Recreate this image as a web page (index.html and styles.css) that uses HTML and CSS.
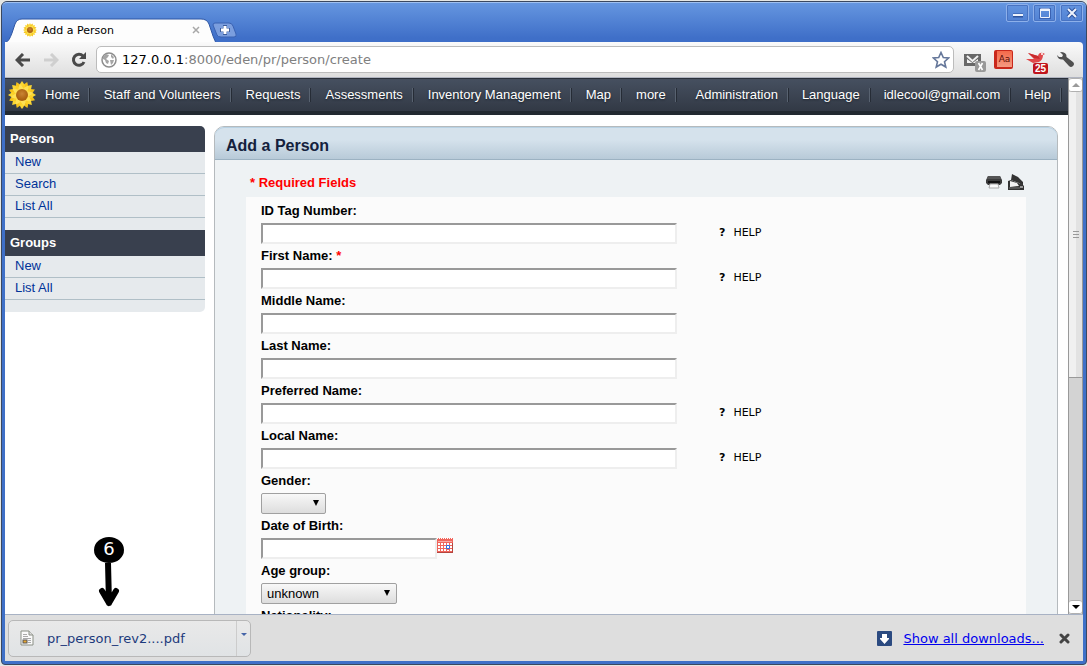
FILE: index.html
```html
<!DOCTYPE html>
<html lang="en">
<head>
    <meta charset="UTF-8">
    <meta name="viewport" content="width=device-width, initial-scale=1.0">
    <title>Add a Person</title>
    <link rel="stylesheet" href="styles.css">
</head>
<body>
    <!-- shared sunflower logo -->
    <svg class="defs" width="0" height="0" aria-hidden="true">
        <defs>
            <radialGradient id="seed" cy=".4">
                <stop offset="0" stop-color="#c98434"/>
                <stop offset="1" stop-color="#a9600f"/>
            </radialGradient>
            <path id="petal" d="M0 -14 Q4 -9 3 -4 L-3 -4 Q-4 -9 0 -14Z"/>
            <g id="ring">
                <use href="#petal"/>
                <use href="#petal" transform="rotate(45)"/>
                <use href="#petal" transform="rotate(90)"/>
                <use href="#petal" transform="rotate(135)"/>
                <use href="#petal" transform="rotate(180)"/>
                <use href="#petal" transform="rotate(225)"/>
                <use href="#petal" transform="rotate(270)"/>
                <use href="#petal" transform="rotate(315)"/>
            </g>
            <symbol id="sunflower" viewBox="-14 -14 28 28">
                <use href="#ring" fill="#f5c21a" transform="rotate(22)"/>
                <use href="#ring" fill="#fbd733"/>
                <use href="#ring" fill="#fbd027" transform="rotate(11) scale(.8)"/>
                <use href="#ring" fill="#fde055" transform="rotate(34) scale(.8)"/>
                <circle r="6" fill="url(#seed)"/>
            </symbol>
        </defs>
    </svg>

    <div class="window">
        <header class="titlebar">
            <div class="tab">
                <svg class="tab-shape" width="211" height="25" viewBox="0 0 211 25" aria-hidden="true">
                    <path d="M0 25 C4 23 5 20 7 15 L10 6 Q12 1 17 1 H196 Q202 1 204 6 L208 18 Q210 23 211 25Z" fill="#fdfdfd" stroke="#2f57a4"/>
                    <path d="M0 24H211V25H0Z" fill="#fafafa"/>
                </svg>
                <svg class="favicon" width="14" height="14"><use href="#sunflower"/></svg>
                <span class="tab-title">Add a Person</span>
                <button class="tab-close" aria-label="Close tab">
                    <svg width="8" height="8" viewBox="0 0 8 8"><path d="M1 1L7 7M7 1L1 7" stroke="#a8a8a8" stroke-width="1.500"/></svg>
                </button>
            </div>
            <button class="new-tab" aria-label="New tab">
                <svg width="26" height="16" viewBox="0 0 26 16">
                    <path d="M1 3 Q1 1 3 1 H17 Q20 1 21 4 L24 12 Q25 15 22 15 H9 Q6 15 5 13Z" fill="#7b9ede" stroke="#3a62b2"/>
                    <path d="M13 3V13M8 8H18" stroke="#3a5c9e" stroke-width="4"/>
                    <path d="M13 4V12M9 8H17" stroke="#fff" stroke-width="3"/>
                </svg>
            </button>
            <div class="window-buttons">
                <button aria-label="Minimize"><svg width="22" height="16"><path d="M6 10.500H16" stroke="#2d539d" stroke-width="4"/><path d="M6 10H16" stroke="#eef3fc" stroke-width="2"/></svg></button>
                <button aria-label="Maximize"><svg width="22" height="16"><path d="M6 4H16V13H6Z" fill="none" stroke="#3a62b2" stroke-width="2"/><path d="M6.500 4H15.500V12.500H6.500Z" fill="none" stroke="#eef3fc"/><path d="M6 5H16" stroke="#eef3fc" stroke-width="2"/></svg></button>
                <button aria-label="Close"><svg width="22" height="16"><path d="M7 4L15 12M15 4L7 12" stroke="#2d539d" stroke-width="4"/><path d="M7 4L15 12M15 4L7 12" stroke="#eef3fc" stroke-width="2"/></svg></button>
            </div>
        </header>

        <div class="toolbar">
            <button class="tool" aria-label="Back">
                <svg width="16" height="14" viewBox="0 0 16 14"><path d="M15 7H3M8 1L2 7L8 13" fill="none" stroke="#4a4a4a" stroke-width="3"/></svg>
            </button>
            <button class="tool" aria-label="Forward">
                <svg width="16" height="14" viewBox="0 0 16 14"><path d="M1 7H13M8 1L14 7L8 13" fill="none" stroke="#cfcfcf" stroke-width="3"/></svg>
            </button>
            <button class="tool" aria-label="Reload">
                <svg width="16" height="16" viewBox="0 0 16 16"><path d="M12 4A5.500 5.500 0 1 0 13 10" fill="none" stroke="#4a4a4a" stroke-width="3"/><path d="M15 0V7H8Z" fill="#4a4a4a"/></svg>
            </button>
            <div class="omnibox">
                <svg width="16" height="16" viewBox="0 0 16 16">
                    <circle cx="8" cy="8" r="7" fill="#fff" stroke="#8e8e8e" stroke-width="1.500"/>
                    <path d="M2 5L5 2L8 3L7 5L5 7L8 9L7 12L5 11L4 8L2 7Z M10 2L13 5L12 7L10 5Z M9 8L13 8L12 11L10 13Z" fill="#a5a5a5"/>
                </svg>
                <div class="url"><b>127.0.0.1</b>:8000/eden/pr/person/create</div>
                <button class="tool" aria-label="Bookmark">
                    <svg width="18" height="18" viewBox="0 0 18 18"><path d="M9 1.500L11.300 6.500L16.500 7L12.500 10.700L13.800 16L9 13.200L4.200 16L5.500 10.700L1.500 7L6.700 6.500Z" fill="#fff" stroke="#65779a" stroke-width="1.600"/></svg>
                </button>
            </div>
            <button class="tool" aria-label="Mail">
                <svg width="24" height="24" viewBox="0 0 24 24">
                    <rect x="2" y="6" width="17" height="12" fill="#686868"/>
                    <path d="M5 8L10.500 13L16 8" fill="none" stroke="#f2f2f2" stroke-width="2"/>
                    <path d="M5 11V15H16V11L10.500 15Z" fill="#f2f2f2"/>
                    <rect x="13" y="13" width="11" height="11" rx="2" fill="#999"/>
                    <path d="M16.500 15L20.500 22M20.500 15L16.500 22" stroke="#fff" stroke-width="1.600"/>
                </svg>
            </button>
            <button class="tool dictionary" aria-label="Dictionary"><span>Aa</span></button>
            <button class="tool bird" aria-label="Notifications">
                <svg width="24" height="24" viewBox="0 0 24 24">
                    <path d="M3 5L13 8Q14 4 18 5L20 6L18 7Q18 12 14 14L8 15L1 11L9 11Z" fill="#e0484a"/>
                    <path d="M3 5L13 8L15 11L9 10Z" fill="#c92a2c"/>
                    <circle cx="17" cy="6" r="1" fill="#fff"/>
                </svg>
                <span class="count">25</span>
            </button>
            <button class="tool" aria-label="Settings">
                <svg width="18" height="18" viewBox="0 0 18 18"><path d="M3 1L6 4L5 6L2 6L0 4Q1 9 6 8.500L12 15Q14 17 16 15Q18 13 16 11L9.500 6Q10 1 3 1Z" fill="#505050"/></svg>
            </button>
        </div>

        <div class="viewport">
            <div class="page">
                <nav class="menu">
                    <svg class="logo" width="28" height="28"><use href="#sunflower"/></svg>
                    <a href="#">Home</a>
                    <a href="#">Staff and Volunteers</a>
                    <a href="#">Requests</a>
                    <a href="#">Assessments</a>
                    <a href="#">Inventory Management</a>
                    <a href="#">Map</a>
                    <a href="#">more</a>
                    <div class="menu-user">
                        <a href="#">Administration</a>
                        <a href="#">Language</a>
                        <a href="#">idlecool@gmail.com</a>
                        <a href="#">Help</a>
                    </div>
                </nav>

                <div class="columns">
                    <aside class="sidebar">
                        <h2>Person</h2>
                        <a href="#">New</a>
                        <a href="#">Search</a>
                        <a href="#">List All</a>
                        <h2>Groups</h2>
                        <a href="#">New</a>
                        <a href="#">List All</a>
                    </aside>

                    <main class="panel">
                        <h1>Add a Person</h1>
                        <div class="panel-body">
                            <div class="form-head">
                                <p>* Required Fields</p>
                                <svg width="16" height="16" viewBox="0 0 16 16">
                                    <path d="M2 2H14L16 6V9L14 11H2L0 9V6Z" fill="#3c3c3c"/>
                                    <path d="M2 2H14L15 5H1Z" fill="#555"/>
                                    <path d="M2 8H14" stroke="#111" stroke-width="2"/>
                                    <path d="M4 10H12L13 14H3Z" fill="#fafafa" stroke="#aaa"/>
                                </svg>
                                <svg width="16" height="16" viewBox="0 0 16 16">
                                    <path d="M0 7L3 6L15 11L16 12V16H0Z" fill="#333"/>
                                    <path d="M2 7L9 9L11 12L2 13Z" fill="#f2f2f2"/>
                                    <path d="M4 0L10 3L15 8V12L11 9L3 6Z" fill="#333"/>
                                    <path d="M1 14H12" stroke="#777"/><path d="M12 13H15" stroke="#fff"/>
                                </svg>
                            </div>
                            <form>
                                <div class="row">
                                    <label for="tag">ID Tag Number:</label>
                                    <div class="field"><input type="text" id="tag"></div>
                                    <a class="help" href="#"><b>?</b>HELP</a>
                                </div>
                                <div class="row">
                                    <label for="first">First Name: <span class="req">*</span></label>
                                    <div class="field"><input type="text" id="first"></div>
                                    <a class="help" href="#"><b>?</b>HELP</a>
                                </div>
                                <div class="row">
                                    <label for="middle">Middle Name:</label>
                                    <div class="field"><input type="text" id="middle"></div>
                                </div>
                                <div class="row">
                                    <label for="last">Last Name:</label>
                                    <div class="field"><input type="text" id="last"></div>
                                </div>
                                <div class="row">
                                    <label for="preferred">Preferred Name:</label>
                                    <div class="field"><input type="text" id="preferred"></div>
                                    <a class="help" href="#"><b>?</b>HELP</a>
                                </div>
                                <div class="row">
                                    <label for="local">Local Name:</label>
                                    <div class="field"><input type="text" id="local"></div>
                                    <a class="help" href="#"><b>?</b>HELP</a>
                                </div>
                                <div class="row">
                                    <label for="gender">Gender:</label>
                                    <div class="field"><div class="select short"><select id="gender"><option></option><option>female</option><option>male</option></select></div></div>
                                </div>
                                <div class="row">
                                    <label for="dob">Date of Birth:</label>
                                    <div class="field">
                                        <input type="text" id="dob" class="date">
                                        <svg class="calendar" width="16" height="15" viewBox="0 0 16 15">
                                            <rect width="16" height="15" fill="#f0655c"/>
                                            <path d="M0 .5H16" stroke="#fff" stroke-dasharray="1 1"/>
                                            <path d="M1 3.500H15" stroke="#f9aaa4"/>
                                            <path d="M1 5h2v2h-2zM4 5h2v2h-2zM7 5h2v2h-2zM10 5h2v2h-2zM13 5h2v2h-2zM1 8h2v2h-2zM4 8h2v2h-2zM7 8h2v2h-2zM13 8h2v2h-2zM1 11h2v2h-2zM4 11h2v2h-2zM7 11h2v2h-2zM10 12h2v1h-2zM13 11h2v2h-2z" fill="#fff"/>
                                            <path d="M9.500 7.500H12.500V10.500H9.500Z" fill="#fff" stroke="#2a6fe0"/>
                                            <path d="M0 14.500H16M15.500 5V15" stroke="#b5453e"/>
                                        </svg>
                                    </div>
                                </div>
                                <div class="row">
                                    <label for="age">Age group:</label>
                                    <div class="field"><div class="select"><select id="age"><option>unknown</option></select></div></div>
                                </div>
                                <div class="row">
                                    <label for="nationality">Nationality:</label>
                                    <div class="field"><div class="select"><select id="nationality"><option></option></select></div></div>
                                </div>
                            </form>
                        </div>
                    </main>
                </div>
            </div>

            <div class="scrollbar">
                <button aria-label="Scroll up"><svg width="8" height="4"><path d="M0 4L4 0L8 4Z" fill="#9a9a9a"/></svg></button>
                <div class="thumb"><i></i><i></i><i></i></div>
                <div class="track"></div>
                <button aria-label="Scroll down"><svg width="8" height="4"><path d="M0 0L4 4L8 0Z" fill="#000"/></svg></button>
            </div>

            <!-- step marker pointing at the download -->
            <div class="step">
                <span>6</span>
                <svg width="22" height="44" viewBox="0 0 22 44"><path d="M10 0L11 40M4 28L11 40L18 28" fill="none" stroke="#000" stroke-width="6" stroke-linecap="round" stroke-linejoin="round"/></svg>
            </div>
        </div>

        <footer class="downloads">
            <div class="download">
                <button class="file">
                    <svg width="14" height="16" viewBox="0 0 14 16">
                        <path d="M1 1H9L13 5V15H1Z" fill="#fafafa" stroke="#8a8f85"/>
                        <path d="M9 1V5H13" fill="#ddd" stroke="#8a8f85"/>
                        <path d="M3 4.500H7M3 6.500H8M3 8.500H11M8 10.500H11M8 12.500H11" stroke="#aaa"/>
                        <rect x="3" y="10" width="4" height="3" fill="#e7a530" stroke="#555"/>
                    </svg>
                    pr_person_rev2....pdf
                </button>
                <button class="more" aria-label="Download options"><svg width="6" height="3"><path d="M0 0H6L3 3Z" fill="#4565a8"/></svg></button>
            </div>
            <svg class="down-icon" width="15" height="15" viewBox="0 0 15 15"><rect width="15" height="15" rx="1" fill="#2b4a80"/><path d="M5 3H10V7H12V8L7.500 13L3 8V7H5Z" fill="#fff"/></svg>
            <a href="#">Show all downloads...</a>
            <button class="tool" aria-label="Close downloads bar"><svg width="11" height="11" viewBox="0 0 11 11"><path d="M2 2L9 9M9 2L2 9" stroke="#444" stroke-width="3" stroke-linecap="round"/></svg></button>
        </footer>
    </div>
</body>
</html>
```

FILE: styles.css
```css
* {
    box-sizing: border-box;
}

body {
    margin: 0;
    padding: 1px 0 1px 1px;
    height: 100vh;
    background: #e4e6e4;
    font-family: "Liberation Sans", Arial, sans-serif;
    font-size: 13px;
    overflow: hidden;
}

button {
    border: 0;
    padding: 0;
    background: none;
    font: inherit;
    display: flex;
    align-items: center;
    justify-content: center;
}

svg {
    display: block;
    flex: none;
}

a {
    text-decoration: none;
}

.defs {
    position: absolute;
}

.window {
    height: 100%;
    display: flex;
    flex-direction: column;
    background: #3f70c8;
    border: 1px solid #3a4860;
    border-radius: 6px 6px 4px 4px;
    padding: 0 3px 3px;
}

/* title bar */
.titlebar {
    display: flex;
    align-items: flex-end;
    height: 40px;
    margin: 0 -3px;
    padding: 0 3px;
    background: linear-gradient(#6596e0, #3f6fc8 90%);
    border-top: 1px solid #9fc0f0;
    border-radius: 5px 5px 0 0;
}

.tab {
    position: relative;
    display: flex;
    align-items: center;
    width: 211px;
    height: 24px;
    padding: 0 10px 0 18px;
    font-family: "DejaVu Sans", sans-serif;
    font-size: 11px;
}

.tab-shape {
    position: absolute;
    left: 0;
    top: 0;
}

.favicon, .tab-title, .tab-close {
    position: relative;
}

.tab-title {
    flex: 1;
    margin-left: 5px;
}

.tab-close {
    width: 20px;
}

.new-tab {
    margin: 0 0 4px -4px;
}

.window-buttons {
    display: flex;
    gap: 4px;
    margin-left: auto;
    align-self: flex-start;
    margin-top: 1px;
}

.window-buttons button {
    width: 23px;
    height: 18px;
    border: 1px solid #8db0ea;
    border-radius: 2px;
    box-shadow: inset 0 0 0 1px #4873c2;
}

/* toolbar */
.toolbar {
    display: flex;
    align-items: center;
    gap: 12px;
    height: 36px;
    padding: 0 10px;
    background: linear-gradient(#fafafa, #dedede);
    border-bottom: 1px solid #b0b4c0;
    border-top-right-radius: 4px;
}

.omnibox {
    flex: 1;
    display: flex;
    align-items: center;
    gap: 5px;
    height: 27px;
    margin-left: -3px;
    padding: 0 3px 0 4px;
    background: #fff;
    border: 1px solid #bcbcbc;
    border-radius: 5px;
}

.url {
    flex: 1;
    color: #808080;
    font-family: "DejaVu Sans", sans-serif;
    font-size: 13px;
}

.url b {
    color: #000;
    font-weight: normal;
}

.omnibox + .tool {
    margin-left: -4px;
}

.dictionary {
    width: 19px;
    height: 19px;
    margin-left: -4px;
    background: linear-gradient(#f5694a, #f59a82);
    border: 1px solid #c9281c;
    border-width: 1px 1px 2px 3px;
    border-radius: 2px;
    color: #5c0e08;
    font-family: "DejaVu Sans", sans-serif;
    font-size: 9px;
}

.bird {
    position: relative;
}

.count {
    position: absolute;
    right: 1px;
    bottom: -2px;
    padding: 0 2px;
    background: #c0141c;
    border-radius: 2px;
    color: #fff;
    font-size: 10px;
    font-weight: bold;
    line-height: 11px;
}

.bird + .tool {
    margin-right: -2px;
    margin-left: -4px;
}

/* web page */
.viewport {
    position: relative;
    flex: 1;
    min-height: 0;
    display: flex;
    background: #fff;
}

.page {
    flex: 1;
    overflow: hidden;
}

.menu {
    display: flex;
    align-items: center;
    height: 37px;
    padding: 0 0 4px 3px;
    background: linear-gradient(#465060, #323945 32px, #222930 32px);
    border-top: 1px solid #2a303a;
    white-space: nowrap;
}

.menu a {
    padding: 0 9px 0 15px;
    border-right: 1px solid #586270;
    box-shadow: 1px 0 #262c36;
    color: #fff;
    line-height: 14px;
    text-shadow: 0 1px 2px #1c222b;
}

.menu .logo + a {
    padding: 0 8px 0 9px;
}

.menu-user {
    display: flex;
    margin-left: auto;
    margin-right: 7px;
}

.menu .menu-user a {
    padding-left: 14px;
}

.columns {
    display: flex;
    align-items: flex-start;
    gap: 9px;
    padding: 11px 10px 0 0;
}

.sidebar {
    width: 200px;
    padding-bottom: 12px;
    background: #e6eaed;
    border-radius: 0 5px 5px 0;
    overflow: hidden;
}

.sidebar h2 {
    margin: 0;
    padding: 0 5px;
    background: #39404e;
    color: #fff;
    font-size: 13px;
    line-height: 26px;
}

.sidebar a + h2 {
    margin-top: 12px;
}

.sidebar a {
    display: block;
    height: 22px;
    padding: 0 10px;
    border-bottom: 1px solid #b0bfc7;
    color: #003399;
    line-height: 20px;
}

.panel {
    flex: 1;
    background: #eef2f4;
    border: 1px solid #b5babd;
    border-radius: 10px 10px 0 0;
}

.panel h1 {
    margin: 0;
    padding: 0 11px;
    background: linear-gradient(#d5e2ec 40%, #b8cad8);
    border-bottom: 1px solid #9cb2c2;
    border-radius: 9px 9px 0 0;
    box-shadow: inset 0 1px #b8d2e4;
    color: #14213d;
    font-size: 16px;
    line-height: 37px;
    height: 33px;
}

.panel-body {
    padding: 8px 31px 0;
}

.form-head {
    display: flex;
    align-items: center;
    gap: 6px;
    height: 28px;
    margin-bottom: 1px;
    padding: 0 2px 0 4px;
}

.form-head p {
    flex: 1;
    margin: 0;
    color: #ff0000;
    font-weight: bold;
}

.req {
    color: #ff0000;
}

form {
    padding: 4px 15px;
    background: #fbfbfb;
}

.row {
    display: grid;
    grid-template-columns: 458px 1fr;
    grid-template-rows: 22px 23px;
}

.row label {
    grid-column: 1 / -1;
    font-weight: bold;
    line-height: 20px;
}

.field {
    display: flex;
}

.field input {
    width: 416px;
    height: 21px;
    padding: 0 3px;
    background: #fff;
    border: 2px solid #eeeeee;
    border-top-color: #999999;
    border-left-color: #999999;
    font: inherit;
}

.field .date {
    width: 176px;
}

.select {
    position: relative;
    width: 136px;
    height: 21px;
}

.select.short {
    width: 65px;
}

.select::after {
    content: "";
    position: absolute;
    right: 7px;
    top: 7px;
    border: 3px solid transparent;
    border-top: 6px solid #000;
    border-bottom: 0;
    pointer-events: none;
}

.select select {
    appearance: none;
    width: 100%;
    height: 100%;
    padding: 0 5px;
    background: linear-gradient(#f8f8f8, #dddddd);
    border: 1px solid #a0a0a0;
    border-radius: 2px;
    color: #000;
    font: inherit;
}

.help {
    color: #000;
    font-family: "DejaVu Sans", sans-serif;
    font-size: 11px;
    line-height: 19px;
}

.help b {
    margin-right: 8px;
}

/* scrollbar */
.scrollbar {
    display: flex;
    flex-direction: column;
    width: 15px;
    border-left: 1px solid #999;
    border-right: 1px solid #999;
    background: #d3d3d3;
}

.scrollbar button {
    height: 14px;
    background: #fff;
    border: 1px solid #b0b0b0;
    border-width: 1px 0;
    border-radius: 3px;
}

.thumb {
    flex: 9;
    display: flex;
    flex-direction: column;
    align-items: center;
    justify-content: center;
    gap: 2px;
    background: linear-gradient(90deg, #f0f0f0 50%, #e2e2e2 50%);
    border-bottom: 1px solid #999;
}

.thumb i {
    width: 6px;
    height: 1px;
    background: #999;
}

.track {
    flex: 7;
}

.step {
    position: absolute;
    left: 89px;
    bottom: 7px;
    display: flex;
    flex-direction: column;
    align-items: center;
}

.step span {
    width: 30px;
    height: 26px;
    background: #000;
    border-radius: 50%;
    color: #fff;
    font-family: "DejaVu Sans", sans-serif;
    font-size: 18px;
    line-height: 24px;
    text-align: center;
}

/* download shelf */
.downloads {
    display: flex;
    align-items: center;
    height: 47px;
    padding: 0 13px 0 3px;
    background: #dedede;
    border-top: 1px solid #a8b2c4;
    font-family: "DejaVu Sans", sans-serif;
    font-size: 13px;
}

.download {
    display: flex;
    height: 37px;
    width: 243px;
    margin-right: auto;
    background: linear-gradient(#e9e9e9, #e0e3e5);
    border: 1px solid #b8b8b8;
    border-radius: 5px;
}

.file {
    flex: 1;
    justify-content: flex-start;
    gap: 13px;
    padding: 0 0 0 11px;
    color: #1c3a7c;
}

.more {
    width: 14px;
    padding-bottom: 8px;
    border-left: 1px solid #ccc;
}

.downloads a {
    margin: 0 15px 0 11px;
    color: #0000ee;
    text-decoration: underline;
}
```
